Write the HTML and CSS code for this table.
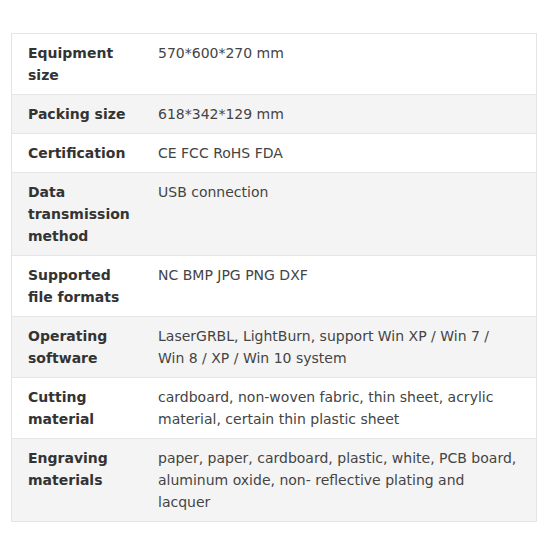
FILE: index.html
```html
<!DOCTYPE html>
<html>
<head>
<meta charset="utf-8">
<link rel="stylesheet" href="styles.css">
</head>
<body>
<table class="spec">
  <tr><th>Equipment size</th><td>570*600*270 mm</td></tr>
  <tr><th>Packing size</th><td>618*342*129 mm</td></tr>
  <tr><th>Certification</th><td>CE FCC RoHS FDA</td></tr>
  <tr><th>Data transmission method</th><td>USB connection</td></tr>
  <tr><th>Supported file formats</th><td>NC BMP JPG PNG DXF</td></tr>
  <tr><th>Operating software</th><td>LaserGRBL, LightBurn, support Win XP / Win 7 / Win 8 / XP / Win 10 system</td></tr>
  <tr><th>Cutting material</th><td>cardboard, non-woven fabric, thin sheet, acrylic material, certain thin plastic sheet</td></tr>
  <tr><th>Engraving materials</th><td>paper, paper, cardboard, plastic, white, PCB board, aluminum oxide, non- reflective plating and lacquer</td></tr>
</table>
</body>
</html>
```
FILE: styles.css
```css
html, body {
  margin: 0;
  padding: 0;
  background: #fff;
}
body {
  padding: 33px 13px 0 11px;
  font-family: "DejaVu Sans", Verdana, sans-serif;
  font-size: 14px;
  line-height: 22px;
  color: #444;
}
.spec {
  width: 526px;
  table-layout: fixed;
  border-collapse: collapse;
  border: 1px solid #e4e4e4;
}
.spec tr:nth-child(even) {
  background: #f4f4f4;
}
.spec th, .spec td {
  vertical-align: top;
  text-align: left;
  padding: 8px 0 8px 0;
  border-top: 1px solid #e6e6e6;
}
.spec th {
  width: 104px;
  padding-left: 16px;
  padding-right: 26px;
  font-weight: bold;
  color: #333;
}
.spec td {
  padding-right: 19px;
}
```
